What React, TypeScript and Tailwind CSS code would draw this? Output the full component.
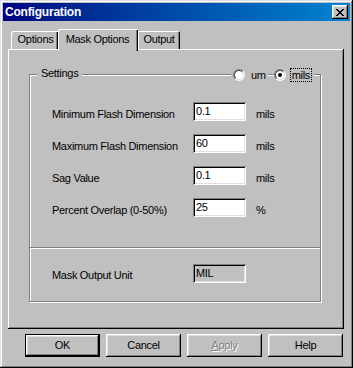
import React from "react";

const raised =
  "shadow-[inset_-1px_-1px_0_#000000,inset_1px_1px_0_#ffffff,inset_-2px_-2px_0_#808080,inset_2px_2px_0_#dfdfdf]";
const sunken =
  "shadow-[inset_1px_1px_0_#808080,inset_-1px_-1px_0_#ffffff,inset_2px_2px_0_#000000,inset_-2px_-2px_0_#dfdfdf]";

function Radio({ checked }: { checked?: boolean }) {
  return (
    <div className="w-[12px] h-[12px] rounded-full border border-t-[#808080] border-l-[#808080] border-b-white border-r-white">
      <div className="w-full h-full rounded-full border border-t-[#404040] border-l-[#404040] border-b-[#dfdfdf] border-r-[#dfdfdf] bg-white flex items-center justify-center">
        {checked && <div className="w-[4px] h-[4px] rounded-full bg-black" />}
      </div>
    </div>
  );
}

function Button({
  children,
  def,
  disabled,
}: {
  children: React.ReactNode;
  def?: boolean;
  disabled?: boolean;
}) {
  if (def) {
    return (
      <div className="w-[75px] h-[23px] border border-black">
        <div className={`w-full h-full ${raised} flex items-center justify-center text-black`}>
          {children}
        </div>
      </div>
    );
  }
  return (
    <div
      className={`w-[75px] h-[23px] ${raised} flex items-center justify-center ${
        disabled ? "text-[#808080] [text-shadow:1px_1px_0_#ffffff]" : "text-black"
      }`}
    >
      {children}
    </div>
  );
}

const rows = [
  ["Minimum Flash Dimension", "0.1", "mils"],
  ["Maximum Flash Dimension", "60", "mils"],
  ["Sag Value", "0.1", "mils"],
  ["Percent Overlap (0-50%)", "25", "%"],
];

export default function App() {
  return (
    <div className="w-[353px] h-[368px] bg-[#c0c0c0] font-['Liberation_Sans',Arial,sans-serif] text-[11px] leading-[13px] text-black tracking-[-0.3px]">
      <div
        className={`w-[353px] h-[368px] p-[3px] flex flex-col shadow-[inset_-1px_-1px_0_#000000,inset_1px_1px_0_#dfdfdf,inset_-2px_-2px_0_#808080,inset_2px_2px_0_#ffffff]`}
      >
        {/* Title bar */}
        <div className="h-[18px] flex items-center justify-between bg-gradient-to-r from-[#000080] to-[#1084d0] pl-[2px] pr-[2px]">
          <span className="text-white font-bold text-[12px] tracking-[-0.2px]">Configuration</span>
          <div className={`w-[16px] h-[14px] bg-[#c0c0c0] ${raised} flex items-center justify-center`}>
            <svg width="8" height="7" viewBox="0 0 8 7">
              <path d="M0 0h2v1h1v1h2v-1h1v-1h2v1h-1v1h-1v1h-1v1h1v1h1v1h1v1h-2v-1h-1v-1h-2v1h-1v1h-2v-1h1v-1h1v-1h1v-1h-1v-1h-1v-1h-1z" fill="#000" />
            </svg>
          </div>
        </div>

        {/* Tabs */}
        <div className="mt-[8px] h-[20px] flex items-start pl-[8px] relative z-10">
          <div className="mt-[2px] w-[47px] h-[18px] shadow-[inset_1px_1px_0_#ffffff,inset_-1px_0_0_#000000,inset_-2px_0_0_#808080] rounded-tl-[2px] flex items-center justify-center pb-[1px] pl-[2px]">
            Options
          </div>
          <div className="w-[80px] h-[22px] bg-[#c0c0c0] shadow-[inset_1px_1px_0_#ffffff,inset_-1px_0_0_#000000,inset_-2px_0_0_#808080] rounded-tl-[2px] flex items-start justify-center pt-[4px] pr-[1px]">
            Mask Options
          </div>
          <div className="mt-[2px] w-[42px] h-[18px] shadow-[inset_1px_1px_0_#ffffff,inset_-1px_0_0_#000000,inset_-2px_0_0_#808080] rounded-tr-[2px] flex items-center justify-center pb-[1px]">
            Output
          </div>
        </div>

        {/* Panel */}
        <div className="ml-[5px] w-[336px] h-[280px] shadow-[inset_-1px_-1px_0_#000000,inset_1px_1px_0_#ffffff,inset_-2px_-2px_0_#808080] pt-[25px] pl-[21px]">
          <div className="relative w-[292px] border border-[#808080] shadow-[1px_1px_0_#ffffff,inset_1px_1px_0_#ffffff] pt-[27px] pb-[18px]">
            <div className="absolute left-[7px] top-[-8px] px-[4px] bg-[#c0c0c0]">Settings</div>
            <div className="absolute right-[6px] top-[-7px] flex items-center gap-[6px]">
              <div className="flex items-center bg-[#c0c0c0] pl-[2px] pr-[2px] h-[14px]">
                <Radio />
                <span className="ml-[6px]">um</span>
              </div>
              <div className="flex items-center bg-[#c0c0c0] pr-[2px] h-[14px]">
                <Radio checked />
                <span className="ml-[4px] border border-dotted border-black px-[1px] leading-[12px]">mils</span>
              </div>
            </div>

            <div className="flex flex-col gap-[13px] pl-[22px]">
              {rows.map(([label, value, unit]) => (
                <div key={label} className="flex items-start h-[19px]">
                  <span className="w-[141px] pt-[6px]">{label}</span>
                  <div className={`w-[53px] h-[19px] bg-white ${sunken} pl-[3px] pt-[3px]`}>
                    {value}
                  </div>
                  <span className="ml-[10px] pt-[6px]">{unit}</span>
                </div>
              ))}
            </div>

            <div className="mt-[30px] h-[2px] border-t border-[#808080] border-b border-b-white" />

            <div className="mt-[15px] flex items-start h-[19px] pl-[22px]">
              <span className="w-[141px] pt-[5px]">Mask Output Unit</span>
              <div className={`w-[53px] h-[19px] bg-[#c0c0c0] ${sunken} pl-[3px] pt-[3px]`}>MIL</div>
            </div>
          </div>
        </div>

        {/* Buttons */}
        <div className="mt-[5px] ml-[22px] flex gap-[6px]">
          <Button def>OK</Button>
          <Button>Cancel</Button>
          <Button disabled>
            <span>
              <span className="underline">A</span>pply
            </span>
          </Button>
          <Button>Help</Button>
        </div>
      </div>
    </div>
  );
}
